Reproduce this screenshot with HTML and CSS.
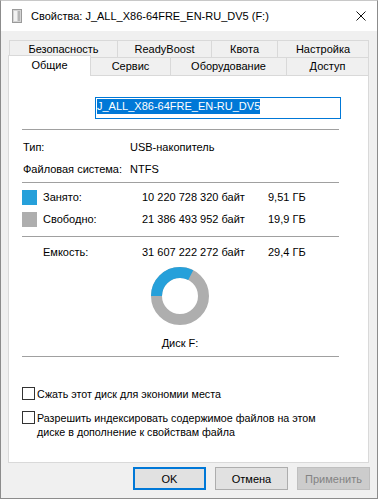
FILE: index.html
```html
<!DOCTYPE html>
<html lang="ru">
<head>
  <meta charset="UTF-8" />
  <title>Свойства: J_ALL_X86-64FRE_EN-RU_DV5 (F:)</title>
  <link rel="stylesheet" href="styles.css">
</head>
<body>
  <div class="window">
    <div class="titlebar">
      <svg class="title-icon" width="10" height="14" viewBox="0 0 10 14">
        <rect x="0.5" y="0.5" width="9" height="13" fill="#d4d4d4" stroke="#9a9a9a" />
        <rect x="2" y="2" width="3" height="10" fill="#f2f2f2" />
        <rect x="6" y="2" width="2" height="10" fill="#b5b5b5" />
      </svg>
      <span class="title-text">Свойства: J_ALL_X86-64FRE_EN-RU_DV5 (F:)</span>
      <svg class="close" width="10" height="10" viewBox="0 0 10 10">
        <path d="M0.5 0.5 L9.5 9.5 M9.5 0.5 L0.5 9.5" stroke="#111" stroke-width="1" fill="none" />
      </svg>
    </div>

    <div class="tabs">
      <div class="tab-row first">
        <div class="tab w-sec">Безопасность</div>
        <div class="tab w-rb">ReadyBoost</div>
        <div class="tab w-quota">Квота</div>
        <div class="tab w-set">Настройка</div>
      </div>
      <div class="tab-row second">
        <div class="tab active w-gen">Общие</div>
        <div class="tab w-serv">Сервис</div>
        <div class="tab w-hw">Оборудование</div>
        <div class="tab w-acc">Доступ</div>
      </div>
    </div>

    <div class="panel">
      <div class="name-box"><span class="selected">J_ALL_X86-64FRE_EN-RU_DV5</span></div>

      <div class="sep first-sep"></div>

      <div class="info">
        <div class="row"><span class="key">Тип:</span><span>USB-накопитель</span></div>
        <div class="row"><span class="key">Файловая система:</span><span>NTFS</span></div>
      </div>

      <div class="sep tight"></div>

      <div class="usage">
        <div class="row">
          <span class="swatch used"></span>
          <span class="label">Занято:</span>
          <span class="bytes">10 220 728 320 байт</span>
          <span>9,51 ГБ</span>
        </div>
        <div class="row">
          <span class="swatch free"></span>
          <span class="label">Свободно:</span>
          <span class="bytes">21 386 493 952 байт</span>
          <span>19,9 ГБ</span>
        </div>
      </div>

      <div class="sep mid-sep"></div>

      <div class="row capacity">
        <span class="swatch none"></span>
        <span class="label">Емкость:</span>
        <span class="bytes">31 607 222 272 байт</span>
        <span>29,4 ГБ</span>
      </div>

      <div class="chart">
        <svg width="58" height="58" viewBox="0 0 58 58">
          <circle cx="29" cy="29" r="23.5" fill="none" stroke="#aeaeae" stroke-width="11" />
          <circle cx="29" cy="29" r="23.5" fill="none" stroke="#26a0da" stroke-width="11"
            stroke-dasharray="47.8 200" transform="rotate(180 29 29)" />
        </svg>
        <div class="disk">Диск F:</div>
      </div>

      <div class="sep low-sep"></div>

      <label class="check first-check"><span class="box"></span><span>Сжать этот диск для экономии места</span></label>
      <label class="check second-check"><span class="box"></span><span>Разрешить индексировать содержимое файлов на этом<br>диске в дополнение к свойствам файла</span></label>
    </div>

    <div class="buttons">
      <button class="btn default">OK</button>
      <button class="btn">Отмена</button>
      <button class="btn disabled">Применить</button>
    </div>
  </div>
</body>
</html>
```

FILE: styles.css
```css
body {
  margin: 0;
  font-family: 'Liberation Sans', Arial, sans-serif;
  font-size: 11px;
  color: #000;
  background: #f0f0f0;
}
.window {
  width: 378px;
  height: 499px;
  box-sizing: border-box;
  border: 1px solid #8c8c8c;
  border-top-color: #c8c8c8;
  background: #f0f0f0;
}
.titlebar {
  height: 30px;
  background: #fff;
  display: flex;
  align-items: center;
  padding-left: 11px;
}
.title-icon {
  margin-right: 9px;
}
.title-text {
  font-size: 11px;
  flex: 1;
}
.close {
  margin-right: 11px;
}
.tabs {
  margin-top: 9px;
  padding-left: 7px;
}
.tab-row {
  display: flex;
  align-items: flex-end;
}
.tab-row.first {
  margin-left: 1px;
  height: 18px;
}
.tab-row.second {
  height: 18px;
  margin-top: -1px;
}
.tab {
  box-sizing: border-box;
  height: 18px;
  border: 1px solid #d9d9d9;
  border-bottom: none;
  margin-left: -1px;
  text-align: center;
  line-height: 17px;
  background: #f0f0f0;
}
.tab:first-child {
  margin-left: 0;
}
.tab.active {
  height: 21px;
  margin-bottom: -1px;
  background: #fff;
  position: relative;
  z-index: 1;
  line-height: 19px;
}
.w-sec { width: 109px; }
.w-rb { width: 95px; }
.w-quota { width: 67px; }
.w-set { width: 92px; }
.w-gen { width: 83px; }
.w-serv { width: 81px; }
.w-hw { width: 117px; }
.w-acc { width: 83px; }

.panel {
  width: 361px;
  height: 388px;
  box-sizing: border-box;
  margin-left: 7px;
  background: #fff;
  border: 1px solid #d9d9d9;
  padding: 21px 0 0 14px;
}
.name-box {
  width: 246px;
  height: 22px;
  box-sizing: border-box;
  margin-left: 72px;
  border: 1px solid #0078d7;
  padding: 1px 0 0 1px;
}
.selected {
  display: inline-block;
  background: #0078d7;
  color: #fff;
  line-height: 15px;
  height: 15px;
  font-size: 11px;
}
.sep {
  height: 1px;
  background: #a0a0a0;
  width: 317px;
  margin-left: -1px;
}
.first-sep { margin-top: 10px; }
.tight { margin-top: 2px; }
.mid-sep { margin-top: 6px; }
.low-sep { margin-top: 3px; }

.row {
  display: flex;
  align-items: center;
  height: 22px;
}
.info {
  margin-top: 6px;
}
.key {
  width: 107px;
}
.usage {
  margin-top: 3px;
}
.swatch {
  width: 15px;
  height: 15px;
  margin-left: -1px;
  margin-right: 6px;
}
.swatch.used { background: #26a0da; }
.swatch.free { background: #aeaeae; }
.label {
  width: 99px;
}
.bytes {
  width: 126px;
}
.capacity {
  margin-top: 4px;
}
.chart {
  width: 58px;
  margin: 4px 0 0 128px;
  display: flex;
  flex-direction: column;
  align-items: center;
}
.chart svg {
  display: block;
}
.disk {
  margin-top: 8px;
  line-height: 20px;
  white-space: nowrap;
}
.check {
  display: flex;
  align-items: flex-start;
  line-height: 14px;
  font-size: 10.7px;
}
.first-check {
  margin-top: 30px;
}
.second-check {
  margin-top: 10px;
}
.box {
  width: 13px;
  height: 13px;
  box-sizing: border-box;
  border: 1px solid #333;
  background: #fff;
  margin: 0 2px 0 -1px;
  flex-shrink: 0;
}
.buttons {
  display: flex;
  justify-content: flex-end;
  gap: 9px;
  padding: 4px 7px 0 0;
}
.btn {
  width: 73px;
  height: 23px;
  box-sizing: border-box;
  font-family: inherit;
  font-size: 11px;
  background: #e1e1e1;
  border: 1px solid #adadad;
  padding: 0;
  color: #000;
}
.btn.default {
  border: 2px solid #0078d7;
}
.btn.disabled {
  background: #cccccc;
  border-color: #bfbfbf;
  color: #838383;
}
```
